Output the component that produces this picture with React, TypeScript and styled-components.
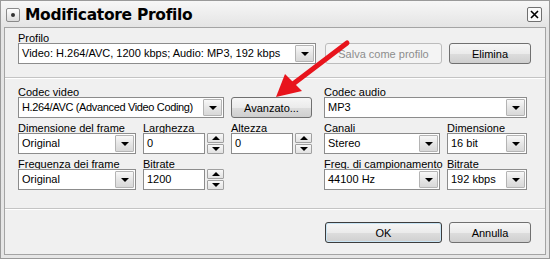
import styled, { createGlobalStyle } from "styled-components"

const Global = createGlobalStyle`
  html, body { margin: 0; padding: 0; background: #ffffff; }
  body { font-family: "Liberation Sans", Arial, sans-serif; font-size: 11px; color: #000; }
`

const Window = styled.div`
  position: relative;
  width: 550px;
  height: 259px;
  box-sizing: border-box;
  border: 1px solid #9a9a9a;
  background: linear-gradient(#f7f7f7, #e4e4e4 26px, #e6e6e6);
  display: flex;
  flex-direction: column;
`

const TitleBar = styled.div`
  height: 26px;
  display: flex;
  align-items: center;
  padding: 1px 5px 0 5px;
  box-sizing: border-box;
  gap: 5px;
`

const WinIcon = styled.div`
  width: 12px;
  height: 12px;
  border: 1px solid #8a8a8a;
  border-radius: 2px;
  background: linear-gradient(#ffffff, #dcdcdc);
  display: flex;
  align-items: center;
  justify-content: center;
  &::after {
    content: "";
    width: 4px;
    height: 4px;
    border-radius: 50%;
    background: #333;
  }
`

const Title = styled.div`
  flex: 1;
  font-weight: bold;
  font-size: 15.5px;
  font-family: "DejaVu Sans", sans-serif;
  letter-spacing: -0.3px;
`

const CloseBtn = styled.div`
  width: 13px;
  height: 13px;
  border: 1px solid #707070;
  border-radius: 2px;
  background: #fafafa;
  display: flex;
  align-items: center;
  justify-content: center;
  margin-right: 2px;
`

const Body = styled.div`
  flex: 1;
  margin: 0 3px 3px 3px;
  border: 1px solid #a4a4a4;
  background: #f0f0f0;
  display: flex;
  flex-direction: column;
`

const Section = styled.div<{ $pad: string }>`
  padding: ${(p) => p.$pad};
  border-bottom: 1px solid #c4c4c4;
  box-shadow: 0 1px 0 #ffffff;
`

const Label = styled.div`
  height: 13px;
  line-height: 16px;
  white-space: nowrap;
`

const ProfileRow = styled.div`
  display: flex;
  align-items: center;
`

const Grid = styled.div`
  display: grid;
  grid-template-columns: 118px 81px 86px 116px 80px;
  column-gap: 7px;
  row-gap: 2px;
`

const Field = styled.div<{ $span?: number; $padRight?: number }>`
  grid-column: span ${(p) => p.$span ?? 1};
  padding-right: ${(p) => p.$padRight ?? 0}px;
  display: flex;
  flex-direction: column;
  min-width: 0;
`

const ComboBox = styled.div<{ $w?: number }>`
  height: 21px;
  box-sizing: border-box;
  width: ${(p) => (p.$w ? `${p.$w}px` : "100%")};
  border: 1px solid #8c8c8c;
  background: #ffffff;
  display: flex;
  align-items: stretch;
`

const ComboText = styled.div<{ $tight?: boolean }>`
  flex: 1;
  padding-left: 3px;
  line-height: 19px;
  white-space: nowrap;
  overflow: hidden;
  letter-spacing: ${(p) => (p.$tight ? "-0.35px" : "normal")};
`

const DropBtn = styled.div`
  width: 17px;
  margin: 1px;
  border: 1px solid #b4b4b4;
  border-radius: 1px;
  background: linear-gradient(#f8f8f8, #e6e6e6 50%, #d8d8d8);
  display: flex;
  align-items: center;
  justify-content: center;
  &::after {
    content: "";
    border-left: 4px solid transparent;
    border-right: 4px solid transparent;
    border-top: 4px solid #000;
    margin-top: 1px;
  }
`

const SpinWrap = styled.div`
  display: flex;
  height: 21px;
  gap: 2px;
`

const SpinInput = styled.div`
  flex: 1;
  box-sizing: border-box;
  border: 1px solid #8c8c8c;
  background: #ffffff;
  padding-left: 3px;
  line-height: 19px;
`

const SpinBtns = styled.div`
  width: 17px;
  display: flex;
  flex-direction: column;
  gap: 1px;
`

const SpinBtn = styled.div<{ $up?: boolean }>`
  flex: 1;
  border: 1px solid #a0a0a0;
  border-radius: 1px;
  background: linear-gradient(#f8f8f8, #e2e2e2);
  display: flex;
  align-items: center;
  justify-content: center;
  &::after {
    content: "";
    border-left: 4px solid transparent;
    border-right: 4px solid transparent;
    ${(p) => (p.$up ? "border-bottom: 4px solid #000;" : "border-top: 4px solid #000;")}
  }
`

const Button = styled.div<{ $w: number; $disabled?: boolean; $default?: boolean }>`
  width: ${(p) => p.$w}px;
  height: 21px;
  box-sizing: border-box;
  border: 1px solid ${(p) => (p.$disabled ? "#bcbcbc" : p.$default ? "#3c3c3c" : "#707070")};
  border-radius: 3px;
  background: ${(p) =>
    p.$disabled ? "#f4f4f4" : "linear-gradient(#f6f6f6, #ebebeb 50%, #dddddd 51%, #cfcfcf)"};
  color: ${(p) => (p.$disabled ? "#8d8d8d" : "#000")};
  display: flex;
  align-items: center;
  justify-content: center;
  white-space: nowrap;
  ${(p) => (p.$default ? "box-shadow: inset 0 0 0 1px #c8e4f4;" : "")}
`

const Footer = styled.div`
  flex: 1;
  display: flex;
  justify-content: flex-end;
  align-items: flex-start;
  gap: 7px;
  padding: 13px 14px 0 0;
`

const Arrow = styled.svg`
  position: absolute;
  left: 270px;
  top: 38px;
`

function Combo({ text, w, tight }: { text: string; w?: number; tight?: boolean }) {
  return (
    <ComboBox $w={w}>
      <ComboText $tight={tight}>{text}</ComboText>
      <DropBtn />
    </ComboBox>
  )
}

function Spin({ value }: { value: string }) {
  return (
    <SpinWrap>
      <SpinInput>{value}</SpinInput>
      <SpinBtns>
        <SpinBtn $up />
        <SpinBtn />
      </SpinBtns>
    </SpinWrap>
  )
}

export default function App() {
  return (
    <>
      <Global />
      <Window>
        <TitleBar>
          <WinIcon />
          <Title>Modificatore Profilo</Title>
          <CloseBtn>
            <svg width="9" height="9" viewBox="0 0 9 9">
              <path d="M1 1 L8 8 M8 1 L1 8" stroke="#000" strokeWidth="1.6" />
            </svg>
          </CloseBtn>
        </TitleBar>
        <Body>
          <Section $pad="2px 14px 13px 13px">
            <Label>Profilo</Label>
            <ProfileRow>
              <Combo text="Video: H.264/AVC, 1200 kbps; Audio: MP3, 192 kbps" w={298} />
              <Button $w={117} $disabled style={{ marginLeft: 9 }}>
                Salva come profilo
              </Button>
              <Button $w={82} style={{ marginLeft: 7 }}>
                Elimina
              </Button>
            </ProfileRow>
          </Section>
          <Section $pad="6px 14px 18px 13px">
            <Grid>
              <Field $span={2}>
                <Label>Codec video</Label>
                <Combo text="H.264/AVC (Advanced Video Coding)" tight />
              </Field>
              <Field>
                <Label>&nbsp;</Label>
                <Button $w={81}>Avanzato...</Button>
              </Field>
              <Field $span={2}>
                <Label>Codec audio</Label>
                <Combo text="MP3" />
              </Field>

              <Field>
                <Label>Dimensione del frame</Label>
                <Combo text="Original" />
              </Field>
              <Field>
                <Label>Larghezza</Label>
                <Spin value="0" />
              </Field>
              <Field $padRight={5}>
                <Label>Altezza</Label>
                <Spin value="0" />
              </Field>
              <Field>
                <Label>Canali</Label>
                <Combo text="Stereo" />
              </Field>
              <Field>
                <Label>Dimensione</Label>
                <Combo text="16 bit" />
              </Field>

              <Field>
                <Label>Frequenza dei frame</Label>
                <Combo text="Original" />
              </Field>
              <Field>
                <Label>Bitrate</Label>
                <Spin value="1200" />
              </Field>
              <Field />
              <Field>
                <Label>Freq. di campionamento</Label>
                <Combo text="44100 Hz" />
              </Field>
              <Field>
                <Label>Bitrate</Label>
                <Combo text="192 kbps" />
              </Field>
            </Grid>
          </Section>
          <Footer>
            <Button $w={117} $default>
              OK
            </Button>
            <Button $w={82}>Annulla</Button>
          </Footer>
        </Body>
        <Arrow width="80" height="62" viewBox="0 0 80 62">
          <path d="M76 4 L22 45" stroke="#e8141c" strokeWidth="5" strokeLinecap="round" />
          <path d="M5 58 L14 35 L31 52 Z" fill="#e8141c" />
        </Arrow>
      </Window>
    </>
  )
}
